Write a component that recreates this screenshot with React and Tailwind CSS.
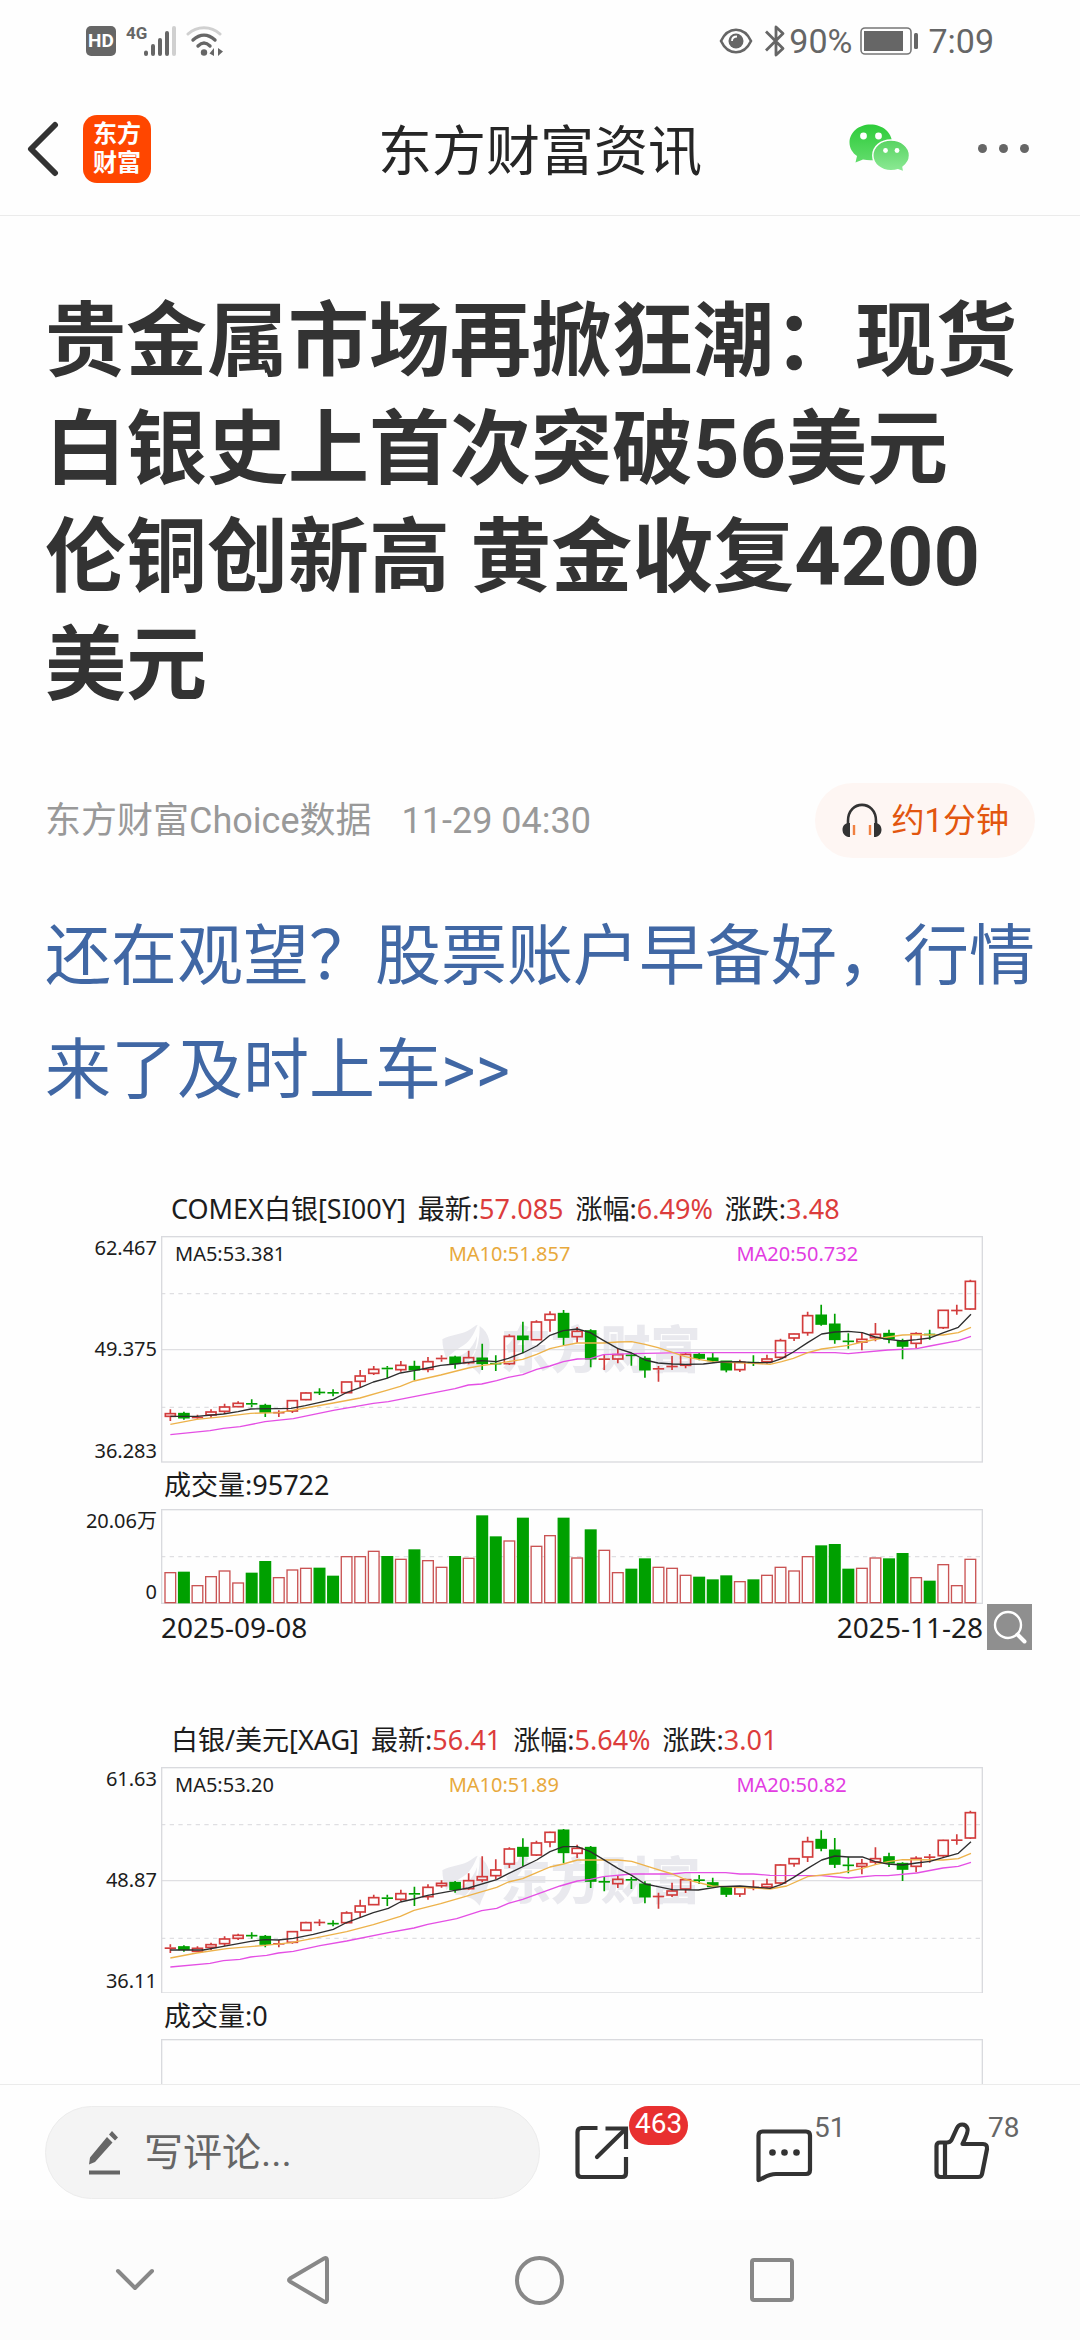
// Article page of a finance news app: status bar, title bar, article, comment toolbar.

// Chart drawings use a fixed unit grid; the first candle sits at X0, each next one STEP further.
const LEFT = 303;
const WIDTH = 2466;
const X0 = 331;
const STEP = 40.68;

const RED = "#d23c3c";
const GREEN = "#00a000";

// [direction, body top, body bottom, wick top, wick bottom]
const COMEX_CANDLES = [
  ["r", 703, 711, 690, 725], ["g", 703, 715, 697, 721], ["r", 712, 717, 706, 719], ["r", 698, 707, 690, 716],
  ["r", 683, 696, 673, 703], ["r", 672, 682, 666, 684], ["g", 671, 676, 660, 684], ["g", 679, 698, 673, 713],
  ["r", 699, 701, 693, 713], ["r", 664, 695, 662, 701], ["r", 641, 661, 639, 663], ["g", 638, 641, 627, 647],
  ["g", 639, 642, 630, 651], ["r", 608, 640, 608, 642], ["r", 590, 606, 572, 625], ["r", 570, 582, 560, 587],
  ["g", 565, 570, 560, 597], ["r", 558, 571, 545, 577], ["g", 562, 571, 544, 603], ["r", 547, 570, 533, 579],
  ["r", 535, 540, 528, 547], ["g", 534, 552, 529, 568], ["r", 535, 550, 514, 555], ["g", 537, 552, 493, 572],
  ["g", 552, 554, 528, 575], ["r", 471, 553, 465, 557], ["g", 471, 480, 427, 522], ["r", 428, 481, 423, 483],
  ["r", 405, 422, 396, 457], ["g", 403, 473, 392, 498], ["r", 456, 472, 443, 490], ["g", 455, 538, 450, 564],
  ["r", 538, 541, 527, 572], ["r", 526, 539, 507, 552], ["g", 526, 530, 522, 559], ["g", 538, 571, 531, 595],
  ["r", 566, 571, 560, 607], ["r", 560, 563, 530, 572], ["r", 525, 558, 520, 567], ["g", 526, 536, 520, 543],
  ["g", 537, 543, 519, 549], ["g", 546, 571, 546, 579], ["r", 549, 571, 541, 578], ["g", 548, 552, 528, 560],
  ["r", 539, 547, 526, 553], ["r", 484, 534, 478, 538], ["r", 464, 476, 463, 485], ["r", 409, 460, 397, 469],
  ["g", 408, 434, 376, 439], ["g", 435, 480, 403, 493], ["g", 484, 488, 462, 508], ["r", 480, 488, 460, 513],
  ["r", 465, 475, 431, 486], ["g", 463, 478, 451, 492], ["g", 485, 500, 478, 540], ["r", 463, 492, 459, 507],
  ["g", 464, 467, 451, 481], ["r", 393, 445, 392, 449], ["r", 392, 395, 376, 406], ["r", 306, 389, 301, 392],
];

const XAG_CANDLES = [
  ["r", 714, 719, 705, 731], ["g", 713, 720, 708, 727], ["r", 717, 726, 711, 728], ["r", 706, 714, 700, 722],
  ["r", 689, 703, 681, 710], ["r", 678, 687, 673, 692], ["g", 677, 681, 669, 688], ["g", 682, 704, 677, 714],
  ["r", 701, 706, 692, 714], ["r", 667, 699, 665, 703], ["r", 640, 663, 637, 665], ["r", 638, 641, 630, 650],
  ["g", 641, 645, 633, 651], ["r", 611, 640, 606, 643], ["r", 590, 608, 571, 625], ["r", 565, 586, 556, 587],
  ["g", 564, 569, 556, 590], ["r", 553, 570, 541, 575], ["g", 551, 556, 532, 590], ["r", 534, 562, 525, 571],
  ["r", 522, 529, 513, 535], ["g", 520, 540, 515, 550], ["r", 514, 538, 492, 541], ["r", 502, 512, 441, 519],
  ["r", 482, 499, 450, 510], ["r", 419, 464, 414, 476], ["g", 415, 440, 387, 470], ["r", 401, 437, 394, 440],
  ["r", 369, 398, 367, 414], ["g", 363, 429, 359, 462], ["r", 417, 432, 406, 446], ["g", 415, 515, 410, 536],
  ["g", 516, 519, 503, 546], ["r", 510, 523, 500, 536], ["g", 509, 514, 503, 539], ["g", 525, 562, 516, 582],
  ["r", 560, 563, 550, 598], ["r", 545, 557, 520, 563], ["r", 511, 539, 508, 551], ["g", 510, 515, 497, 524],
  ["g", 521, 531, 505, 533], ["g", 533, 554, 533, 563], ["r", 534, 554, 530, 563], ["r", 533, 536, 513, 543],
  ["r", 525, 533, 508, 536], ["r", 467, 521, 465, 525], ["r", 448, 463, 446, 472], ["r", 397, 443, 382, 458],
  ["g", 391, 416, 363, 426], ["g", 423, 464, 386, 476], ["g", 466, 470, 442, 492], ["r", 463, 471, 449, 495],
  ["r", 448, 458, 414, 467], ["g", 443, 460, 430, 473], ["g", 463, 479, 459, 515], ["r", 447, 471, 441, 489],
  ["r", 442, 445, 434, 460], ["r", 393, 439, 391, 442], ["r", 391, 394, 375, 406], ["r", 310, 386, 304, 389],
];

const COMEX_LINES = {
  ma5: "331,711 410,711 490,704 534,697 572,689 655,688 693,687 736,679 820,660 857,641 900,625 940,608 980,597 1021,581 1062,574 1103,566 1142,558 1185,554 1225,549 1263,544 1310,547 1345,537 1388,521 1430,500 1470,468 1510,454 1552,449 1591,460 1630,483 1674,508 1715,521 1755,542 1794,551 1837,554 1876,555 1930,554 1980,548 2040,547 2080,550 2130,550 2165,538 2200,518 2243,490 2285,464 2325,458 2365,456 2407,460 2446,473 2484,480 2528,485 2570,481 2610,476 2649,461 2695,444 2733,405",
  ma10: "331,735 410,720 490,712 572,702 655,700 693,694 736,686 820,671 900,656 980,633 1021,621 1062,605 1142,587 1225,566 1265,559 1310,553 1345,547 1388,540 1430,525 1470,508 1510,499 1552,491 1630,491 1674,488 1715,487 1755,495 1794,505 1837,519 1876,532 1915,540 1957,547 1997,549 2080,552 2130,555 2165,547 2200,537 2243,520 2285,509 2365,498 2407,488 2484,473 2528,467 2570,466 2649,467 2695,460 2733,444",
  ma20: "331,766 450,754 490,747 540,742 615,727 700,718 820,693 940,672 985,667 1062,652 1185,628 1225,617 1265,614 1310,604 1345,594 1388,586 1430,570 1470,560 1510,547 1552,539 1591,538 1630,526 1715,523 1876,520 2325,520 2365,523 2484,512 2570,508 2610,500 2695,484 2733,471",
};

const XAG_LINES = {
  ma5: "331,722 430,722 490,711 572,696 615,691 655,692 700,687 760,675 820,660 857,641 940,610 985,597 1021,578 1062,569 1103,558 1185,543 1225,536 1310,511 1345,493 1430,452 1470,427 1510,412 1552,412 1591,427 1630,450 1674,477 1715,498 1755,524 1794,532 1837,541 1915,542 1980,532 2040,530 2130,537 2165,525 2200,505 2243,477 2285,452 2325,440 2365,443 2407,443 2446,457 2484,464 2528,467 2570,461 2610,456 2649,445 2695,432 2733,397",
  ma10: "331,746 410,731 500,718 615,708 693,700 760,687 860,667 940,646 1021,621 1062,603 1142,583 1225,559 1310,534 1345,518 1388,508 1430,490 1470,473 1510,464 1552,452 1674,452 1715,456 1794,481 1837,494 1876,510 1957,530 1997,532 2080,536 2130,539 2180,530 2243,502 2340,491 2407,477 2446,466 2484,457 2528,451 2649,452 2695,448 2733,432",
  ma20: "331,773 450,762 490,754 540,750 572,743 620,738 655,731 700,726 780,709 860,695 985,670 1062,656 1103,645 1190,628 1265,604 1310,597 1345,582 1388,570 1500,530 1552,515 1591,510 1630,502 1715,494 1837,494 1876,490 1997,490 2040,494 2080,494 2130,498 2285,499 2365,506 2446,499 2484,499 2570,491 2649,476 2695,471 2733,459",
};

// [direction, bar top]; all bars stand on 431
const COMEX_VOLUME = [
  ["r", 338], ["g", 337], ["r", 377], ["r", 350], ["r", 333], ["r", 369], ["g", 340], ["g", 305], ["r", 353], ["r", 330],
  ["r", 325], ["g", 325], ["g", 349], ["r", 290], ["r", 290], ["r", 274], ["g", 290], ["r", 298], ["g", 270], ["r", 302],
  ["r", 322], ["g", 290], ["r", 295], ["g", 168], ["g", 231], ["r", 243], ["g", 175], ["r", 259], ["r", 227], ["g", 175],
  ["r", 294], ["g", 210], ["r", 271], ["r", 338], ["g", 328], ["g", 297], ["r", 322], ["r", 325], ["r", 346], ["g", 352],
  ["g", 360], ["g", 348], ["r", 365], ["g", 360], ["r", 346], ["r", 322], ["r", 333], ["r", 290], ["g", 258], ["g", 254],
  ["g", 328], ["r", 325], ["r", 294], ["g", 297], ["g", 281], ["r", 353], ["g", 364], ["r", 314], ["r", 377], ["r", 298],
];

const CHARTS = [
  {
    name: "COMEX白银[SI00Y]",
    quotes: [["最新", "57.085"], ["涨幅", "6.49%"], ["涨跌", "3.48"]],
    prices: ["62.467", "49.375", "36.283"],
    averages: ["MA5:53.381", "MA10:51.857", "MA20:50.732"],
    top: 170,
    candles: COMEX_CANDLES,
    lines: COMEX_LINES,
    volume: "95722",
    volumeScale: ["20.06万", "0"],
    bars: COMEX_VOLUME,
    dates: ["2025-09-08", "2025-11-28"],
  },
  {
    name: "白银/美元[XAG]",
    quotes: [["最新", "56.41"], ["涨幅", "5.64%"], ["涨跌", "3.01"]],
    prices: ["61.63", "48.87", "36.11"],
    averages: ["MA5:53.20", "MA10:51.89", "MA20:50.82"],
    top: 173,
    candles: XAG_CANDLES,
    lines: XAG_LINES,
    volume: "0",
    volumeScale: [],
    bars: [],
  },
];

const PricePlot = ({ top, candles, lines }) => (
  <svg viewBox={`${LEFT} ${top} ${WIDTH} 680`} className="block w-full" aria-hidden="true">
    {/* Watermark */}
    <g fill="#e9e9ee">
      <path
        transform={`translate(1147 ${top + 266})`}
        d="M0 44C22 30 62 30 84 14C92 8 98 3 106 0C96 22 88 44 66 60C48 72 26 84 12 104C6 86 0 66 0 44ZM112 4C142 24 150 62 134 98C128 114 118 130 112 150C100 136 92 128 72 124C84 106 112 84 112 4ZM56 92C76 84 96 60 104 34C104 70 92 100 66 122C60 118 50 116 40 118C36 106 44 96 56 92Z"
      />
      <text x="1322" y={top + 396} fontSize="150" fontWeight="900" fontFamily="Noto Sans CJK SC, sans-serif">
        东方财富
      </text>
    </g>

    <g stroke="#dfdfe2" strokeWidth="4">
      <line x1={LEFT} x2={LEFT + WIDTH} y1={top + 173} y2={top + 173} strokeDasharray="13 13" />
      <line x1={LEFT} x2={LEFT + WIDTH} y1={top + 341} y2={top + 341} />
      <line x1={LEFT} x2={LEFT + WIDTH} y1={top + 514} y2={top + 514} strokeDasharray="13 13" />
    </g>
    <rect x={LEFT + 2} y={top + 2} width={WIDTH - 4} height="676" fill="none" stroke="#d9dade" strokeWidth="4" />

    {candles.map(([dir, bodyTop, bodyBottom, high, low], i) => {
      const x = X0 + i * STEP;
      const color = dir === "r" ? RED : GREEN;
      return (
        <g key={i} stroke={color} strokeWidth="5" fill={dir === "r" ? "none" : GREEN}>
          <path d={`M${x} ${high}V${bodyTop}M${x} ${bodyBottom}V${low}`} />
          {bodyBottom - bodyTop < 6 ? (
            <line x1={x - 17} x2={x + 17} y1={(bodyTop + bodyBottom) / 2} y2={(bodyTop + bodyBottom) / 2} />
          ) : (
            <rect x={x - 15} y={bodyTop} width="30" height={bodyBottom - bodyTop} />
          )}
        </g>
      );
    })}

    <g fill="none" strokeWidth="4" strokeLinejoin="round">
      <polyline points={lines.ma20} stroke="#e44fe4" />
      <polyline points={lines.ma10} stroke="#edb24a" />
      <polyline points={lines.ma5} stroke="#2e2e2e" />
    </g>
  </svg>
);

const VolumePlot = ({ bars }) => (
  <svg viewBox={`${LEFT} 149 ${WIDTH} 285`} className="block w-full" aria-hidden="true">
    <line x1={LEFT} x2={LEFT + WIDTH} y1="292" y2="292" stroke="#dfdfe2" strokeWidth="4" strokeDasharray="13 13" />
    <rect x={LEFT + 2} y="151" width={WIDTH - 4} height="281" fill="none" stroke="#d9dade" strokeWidth="4" />
    {bars.map(([dir, y], i) => (
      <rect
        key={i}
        x={X0 + i * STEP - 16}
        y={y + 2}
        width="32"
        height={428 - y}
        fill={dir === "r" ? "#fefefe" : GREEN}
        stroke={dir === "r" ? "#c95353" : GREEN}
        strokeWidth="4"
      />
    ))}
  </svg>
);

const QuoteChart = ({ chart }) => (
  <figure className="grid grid-cols-[116px_1fr_52px] font-['Noto_Sans','Noto_Sans_CJK_SC',sans-serif] text-[#1c1c1c]">
    <figcaption className="col-start-2 flex h-[53px] items-center gap-3 pl-2.5 text-[27px] whitespace-nowrap">
      <span>{chart.name}</span>
      {chart.quotes.map(([label, value]) => (
        <span key={label}>
          {label}:<span className="text-[#dc3c3c]">{value}</span>
        </span>
      ))}
    </figcaption>

    <div className="col-start-1 flex flex-col justify-between pr-1 text-right text-[20px] leading-6">
      {chart.prices.map((price) => (
        <span key={price}>{price}</span>
      ))}
    </div>
    <div className="relative">
      <PricePlot top={chart.top} candles={chart.candles} lines={chart.lines} />
      <div className="absolute inset-x-0 top-0 grid h-9 grid-cols-[35%_35%_30%] items-center text-[20px]">
        <span className="pl-3.5">{chart.averages[0]}</span>
        <span className="text-[#e8a93c]">{chart.averages[1]}</span>
        <span className="text-[#e23ce2]">{chart.averages[2]}</span>
      </div>
    </div>

    <div className="col-start-2 flex h-[46px] items-center pl-[3px] text-[27px]">成交量:{chart.volume}</div>

    <div className="col-start-1 flex flex-col justify-between pr-1 text-right text-[20px] leading-6">
      {chart.volumeScale.map((value) => (
        <span key={value}>{value}</span>
      ))}
    </div>
    <VolumePlot bars={chart.bars} />

    {chart.dates && (
      <>
        <div className="col-start-2 flex h-[46px] items-center justify-between text-[28px]">
          {chart.dates.map((date) => (
            <time key={date}>{date}</time>
          ))}
        </div>
        <button type="button" aria-label="放大图片" className="ml-1 h-[46px] w-[45px] bg-[#8f8f8f]">
          <svg viewBox="0 0 45 46" className="block h-full w-full" fill="none" stroke="#fff" strokeLinecap="round">
            <circle cx="21" cy="21" r="13" strokeWidth="2.4" />
            <path d="M30.5 30.5L37.5 37.5" strokeWidth="4" />
          </svg>
        </button>
      </>
    )}
  </figure>
);

const StatusBar = () => (
  <div className="flex h-[82px] shrink-0 items-center justify-between pr-[86px] pl-[86px] text-[#666]">
    <div className="flex items-center">
      <span className="flex h-[30px] w-[30px] items-center justify-center rounded-[5px] bg-[#666] text-[19px] font-bold text-white">
        HD
      </span>
      <svg width="52" height="32" viewBox="0 0 52 32" className="ml-2.5" aria-hidden="true">
        <text x="0" y="14" fontSize="17" fontWeight="700" fontFamily="Roboto, sans-serif" fill="#666">4G</text>
        <g strokeWidth="4" strokeLinecap="round" stroke="#666">
          <path d="M20 27.5V29M27 21V29M34 15V29M41 8V29" />
          <path d="M48 3V29" stroke="#d0d0d0" />
        </g>
      </svg>
      <svg width="38" height="32" viewBox="0 0 38 32" className="ml-2" aria-hidden="true" fill="none" strokeLinecap="round">
        <path d="M2 9C11 0.5 25 0.5 34 9" stroke="#d0d0d0" strokeWidth="3" />
        <path d="M7 15C14 8.5 22 8.5 29 15M12 21C16 17 20 17 24 21" stroke="#666" strokeWidth="3.4" />
        <circle cx="18" cy="27.5" r="3.2" fill="#666" />
        <path d="M28 23V31L23.5 28.5ZM32 31V23L37 26.5Z" fill="#666" />
      </svg>
    </div>

    <div className="flex items-center text-[34px] leading-none">
      <svg width="34" height="28" viewBox="0 0 34 28" aria-hidden="true">
        <path d="M2 14C9 -1 25 -1 32 14C25 29 9 29 2 14Z" fill="none" stroke="#666" strokeWidth="2.6" />
        <circle cx="17" cy="14" r="7.5" fill="#666" />
        <path d="M13 14C13 11 15 9.5 18 9.5" stroke="#fff" strokeWidth="1.8" fill="none" />
      </svg>
      <svg width="20" height="34" viewBox="0 0 20 34" className="ml-3" fill="none" stroke="#666" strokeWidth="2.8" aria-hidden="true">
        <path d="M1 7.5L18 24.5L11 31V3L18 9.5L1 26.5" strokeLinejoin="round" />
      </svg>
      <span className="ml-1">90%</span>
      <svg width="60" height="28" viewBox="0 0 60 28" className="ml-2" aria-hidden="true">
        <rect x="1" y="1" width="50" height="26" rx="4" fill="none" stroke="#777" strokeWidth="1.6" />
        <rect x="4" y="4" width="39" height="20" fill="#666" />
        <rect x="54" y="6" width="4" height="16" rx="1.5" fill="#666" />
      </svg>
      <span className="ml-2">7:09</span>
    </div>
  </div>
);

const TitleBar = () => (
  <header className="grid h-[134px] shrink-0 grid-cols-[1fr_auto_1fr] items-center border-b border-[#ebebeb] px-[27px]">
    <div className="flex items-center">
      <button type="button" aria-label="返回">
        <svg width="32" height="56" viewBox="0 0 32 56" fill="none" stroke="#333" strokeWidth="6" strokeLinecap="round" strokeLinejoin="round">
          <path d="M28 4L4 28L28 52" />
        </svg>
      </button>
      <a
        href="#app"
        className="ml-6 flex h-[68px] w-[68px] flex-col items-center justify-center rounded-[14px] bg-[#ff4600] text-[24px] leading-[29px] font-bold text-white"
      >
        <span>东方</span>
        <span>财富</span>
      </a>
    </div>

    <h2 className="pt-2 text-[54px] leading-none text-[#262626]">东方财富资讯</h2>

    <div className="flex items-center justify-end gap-[67px] pr-6">
      <button type="button" aria-label="分享到微信">
        <svg width="62" height="50" viewBox="0 0 62 50">
          <defs>
            <linearGradient id="wx" x1="0" y1="0" x2="0" y2="1">
              <stop offset="0" stopColor="#2ecc3a" />
              <stop offset="1" stopColor="#62dc6c" />
            </linearGradient>
            <linearGradient id="wx-small" x1="0" y1="0" x2="0" y2="1">
              <stop offset="0" stopColor="#57d361" />
              <stop offset="1" stopColor="#8eea96" />
            </linearGradient>
          </defs>
          <path
            d="M21.5 0.5C9.5 0.5 0.5 8.5 0.5 18.5C0.5 24 3.5 29 8 32L6.5 38.5L14 35.5C16.5 36 19 36.3 21.5 36.3C33.5 36.3 43 28.5 43 18.5C43 8.5 33.5 0.5 21.5 0.5Z"
            fill="url(#wx)"
          />
          <path
            d="M42 16C52 16 60.5 22.5 60.5 31.5C60.5 36 58 40 54 43L55 48L49 45.7C47 46.5 44.5 46.8 42 46.8C32 46.8 23.8 40 23.8 31.5C23.8 22.5 32 16 42 16Z"
            fill="url(#wx-small)"
            stroke="#fefefe"
            strokeWidth="1.5"
          />
          <g fill="#fff">
            <circle cx="14.5" cy="12" r="3.4" />
            <circle cx="29.5" cy="12" r="3.4" />
            <circle cx="36.5" cy="26.5" r="2.4" />
            <circle cx="48" cy="26.5" r="2.4" />
          </g>
        </svg>
      </button>
      <button type="button" aria-label="更多" className="flex gap-3">
        <span className="h-[9px] w-[9px] rounded-full bg-[#666]" />
        <span className="h-[9px] w-[9px] rounded-full bg-[#666]" />
        <span className="h-[9px] w-[9px] rounded-full bg-[#666]" />
      </button>
    </div>
  </header>
);

const Article = () => (
  <main className="min-h-0 flex-1 overflow-hidden px-[45px] pt-[72px]">
    <h1 className="text-[81px] leading-[108px] font-bold text-[#333]">
      贵金属市场再掀狂潮：现货白银史上首次突破56美元 伦铜创新高 黄金收复4200美元
    </h1>

    <div className="mt-[63px] flex items-center text-[36px] leading-none text-[#999]">
      <span>东方财富Choice数据</span>
      <time className="ml-[30px]">11-29 04:30</time>
      <button
        type="button"
        className="ml-auto flex h-[75px] items-center gap-2 rounded-full bg-[#fef6f3] px-[26px] text-[33px] text-[#e2560f]"
      >
        <svg width="42" height="36" viewBox="0 0 42 36" fill="none" aria-hidden="true">
          <path d="M7 24V18C7 -3.5 35 -3.5 35 18V24" stroke="#333" strokeWidth="2.6" />
          <path d="M9 20C-1 19 -1 34 9 34ZM33 20C43 19 43 34 33 34Z" fill="#333" />
          <path d="M13 22V32M29 22V32" stroke="#f08040" strokeWidth="2.4" />
        </svg>
        约1分钟
      </button>
    </div>

    <p className="mt-[42px] text-[66px] leading-[114px]">
      <a href="#open-account" className="text-[#4067a4]">
        还在观望？股票账户早备好，行情来了及时上车&gt;&gt;
      </a>
    </p>

    <div className="mt-[55px] flex flex-col gap-16">
      {CHARTS.map((chart) => (
        <QuoteChart key={chart.name} chart={chart} />
      ))}
    </div>
  </main>
);

const Toolbar = () => (
  <footer className="grid h-[136px] shrink-0 grid-cols-2 items-center border-t border-[#ebebeb]">
    <label className="ml-[45px] flex h-[93px] items-center rounded-full border border-[#ececec] bg-[#f4f4f4] pr-8 pl-[42px]">
      <svg width="32" height="46" viewBox="0 0 32 46" fill="#666" aria-hidden="true" className="shrink-0">
        <path d="M19 7L24.5 12.5L7 32L1 34.5L2 27.5ZM21 4.5L24 1L30 7.5L27 10.5Z" />
        <path d="M1 40.5H32V44.5H1Z" />
      </svg>
      <input
        type="text"
        aria-label="写评论"
        placeholder="写评论..."
        className="ml-6 w-full min-w-0 bg-transparent text-[39px] leading-[60px] text-[#333] outline-none placeholder:text-[#666]"
      />
    </label>

    <div className="grid h-[93px] grid-cols-3 text-[28px] leading-8 text-[#666]">
      <button type="button" aria-label="分享 463" className="flex items-start pl-[35px]">
        <svg width="54" height="60" viewBox="0 0 54 60" className="mt-4" fill="none" stroke="#333" strokeWidth="4.2">
          <path d="M22.5 6H6.5Q2.5 6 2.5 10V51Q2.5 55 6.5 55H47Q51 55 51 51V35" />
          <path d="M30.5 6.5H51V27" />
          <path d="M22 35L50 7.5" strokeLinecap="round" />
        </svg>
        <span className="rounded-full bg-[#e83030] px-1.5 pt-0.5 pb-[5px] text-white">463</span>
      </button>
      <button type="button" aria-label="评论 51" className="flex items-start pl-9">
        <svg width="58" height="62" viewBox="0 0 58 62" className="mt-4" fill="none" stroke="#333" strokeWidth="4.2" strokeLinejoin="round">
          <path d="M2.5 58V13.5Q2.5 9.5 6.5 9.5H50Q54 9.5 54 13.5V48Q54 52 50 52H20C11 52 7 57 2.5 58Z" />
          <g fill="#333" stroke="none">
            <circle cx="16.5" cy="30.5" r="3.3" />
            <circle cx="28.5" cy="30.5" r="3.3" />
            <circle cx="40.5" cy="30.5" r="3.3" />
          </g>
        </svg>
        <span className="mt-1.5">51</span>
      </button>
      <button type="button" aria-label="点赞 78" className="flex items-start pl-[34px]">
        <svg width="54" height="60" viewBox="0 0 54 60" className="mt-4 overflow-visible" fill="none" stroke="#333" strokeWidth="4.2" strokeLinejoin="round">
          <path d="M28.5 22C33 13 34.5 9 33.5 6.5C31.5 1 25 1.5 23 6L17.5 18Q16 20.5 13 20.5H6Q2.500 20.5 2.500 24V51Q2.500 55 6.5 55H44Q47.5 55 48 52L53 27Q53.5 22 49 22Z" />
          <path d="M11 21V55" />
        </svg>
        <span className="mt-1.5">78</span>
      </button>
    </div>
  </footer>
);

const SystemNav = () => (
  <nav className="grid h-[120px] shrink-0 grid-cols-[18fr_21fr_22fr_21fr_18fr] items-center bg-[#fcfcfc]">
    <button type="button" aria-label="收起" className="flex justify-center pl-[76px]">
      <svg width="40" height="26" viewBox="0 0 40 26" fill="none" stroke="#888" strokeWidth="4" strokeLinecap="round" strokeLinejoin="round">
        <path d="M3 4L20 21L37 4" />
      </svg>
    </button>
    <button type="button" aria-label="返回上一页" className="flex justify-center">
      <svg width="44" height="50" viewBox="0 0 44 50" fill="none" stroke="#888" strokeWidth="4" strokeLinejoin="round">
        <path d="M4 23.5L38 3.5Q41 2 41 5.5V44.5Q41 48 38 46.5L4 26.5Q2 25 4 23.5Z" />
      </svg>
    </button>
    <button type="button" aria-label="主屏幕" className="flex justify-center">
      <span className="h-[49px] w-[49px] rounded-full border-4 border-[#888]" />
    </button>
    <button type="button" aria-label="最近任务" className="flex justify-center">
      <span className="h-11 w-11 rounded-[4px] border-4 border-[#888]" />
    </button>
  </nav>
);

const App = () => (
  <div className="flex h-screen flex-col bg-[#fefefe] font-[Roboto,'Noto_Sans_CJK_SC',sans-serif]">
    <StatusBar />
    <TitleBar />
    <Article />
    <Toolbar />
    <SystemNav />
  </div>
);

export default App;
